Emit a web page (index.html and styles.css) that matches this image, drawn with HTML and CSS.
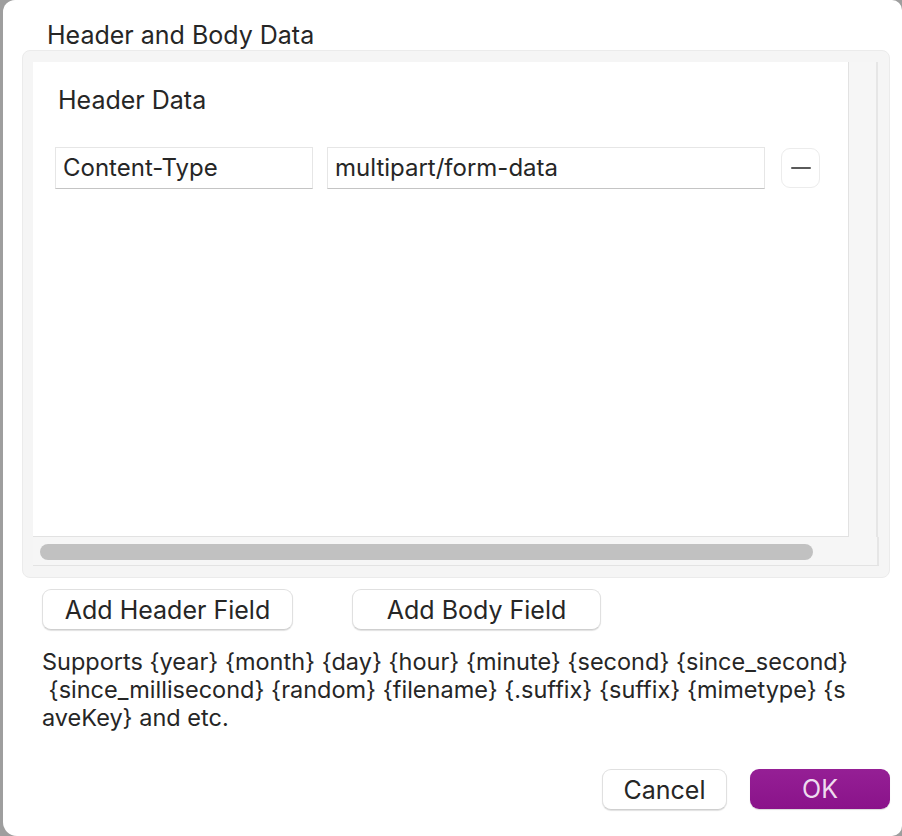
FILE: index.html
```html
<!DOCTYPE html>
<html>
<head>
<meta charset="utf-8">
<link rel="stylesheet" href="styles.css">
</head>
<body>
<div class="dialog">
  <div class="title">Header and Body Data</div>
  <div class="group">
    <div class="scroll">
      <div class="scroll-main">
        <div class="content">
          <div class="section-title">Header Data</div>
          <div class="row">
            <div class="field key">Content-Type</div>
            <div class="field value">multipart/form-data</div>
            <div class="minus"><span class="dash"></span></div>
          </div>
        </div>
        <div class="vtrack"></div>
      </div>
      <div class="htrack"><div class="thumb"></div></div>
    </div>
  </div>
  <div class="add-row">
    <button class="btn add-header">Add Header Field</button>
    <button class="btn add-body">Add Body Field</button>
  </div>
  <div class="help"><span class="line">Supports {year} {month} {day} {hour} {minute} {second} {since_second}</span><span class="line"> {since_millisecond} {random} {filename} {.suffix} {suffix} {mimetype} {s</span><span class="line">aveKey} and etc.</span></div>
  <div class="footer">
    <button class="btn cancel">Cancel</button>
    <button class="btn ok">OK</button>
  </div>
</div>
</body>
</html>
```
FILE: styles.css
```css
* { box-sizing: border-box; }
html, body { margin: 0; padding: 0; }
body {
  width: 902px;
  height: 836px;
  overflow: hidden;
  background: #9e9e9e;
  font-family: "Inter", "Noto Sans", sans-serif;
  color: #262626;
}
.dialog {
  margin-left: 3px;
  width: 899px;
  height: 836px;
  background: #ffffff;
  border-radius: 12px 10px 10px 14px;
  display: flex;
  flex-direction: column;
  padding: 0 0 0 19px;
}
.title {
  font-size: 25px;
  line-height: 28px;
  padding: 21px 0 0 25px;
  height: 50px;
}
.group {
  width: 868px;
  height: 528px;
  background: #f5f5f5;
  border: 1px solid #ebebeb;
  border-radius: 8px;
  padding: 11px 0 0 10px;
}
.scroll {
  width: 846px;
  height: 504px;
  display: flex;
  flex-direction: column;
  border-bottom: 1px solid #e3e3e3;
}
.scroll-main {
  display: flex;
  height: 475px;
}
.content {
  width: 816px;
  height: 475px;
  background: #ffffff;
  border-right: 1px solid #e2e2e2;
  border-bottom: 1px solid #e2e2e2;
  padding: 24px 0 0 22px;
}
.vtrack {
  width: 29px;
  height: 475px;
  background: #f6f6f6;
  border-right: 2px solid #e6e6e6;
}
.htrack {
  height: 28px;
  background: #f6f6f6;
  padding: 7px 0 0 7px;
  border-right: 2px solid #e6e6e6;
}
.thumb {
  width: 773px;
  height: 16px;
  border-radius: 8px;
  background: #c1c1c1;
}
.section-title {
  font-size: 25px;
  line-height: 28px;
  padding-left: 3px;
}
.row {
  display: flex;
  align-items: center;
  margin-top: 33px;
}
.field {
  height: 42px;
  background: #ffffff;
  border: 1px solid #e6e6e6;
  border-bottom: 1px solid #c4c4c4;
  font-size: 24px;
  line-height: 40px;
  padding-left: 7px;
}
.key { width: 258px; }
.value { width: 438px; margin-left: 14px; }
.minus {
  width: 39px;
  height: 40px;
  margin-left: 16px;
  border: 1px solid #ececec;
  border-radius: 9px;
  display: flex;
  align-items: center;
  justify-content: center;
}
.dash {
  width: 20px;
  height: 2px;
  background: #5a5a5a;
  border-radius: 1px;
}
.btn {
  font-family: "Inter", "Noto Sans", sans-serif;
  font-size: 25px;
  color: #262626;
  background: #ffffff;
  border: 1px solid #e0e0e0;
  border-bottom-color: #cfcfcf;
  border-radius: 9px;
  box-shadow: 0 1px 1px rgba(0,0,0,0.12);
  padding: 0;
  height: 41px;
}
.add-row {
  display: flex;
  margin-top: 11px;
  padding-left: 20px;
}
.add-header { width: 251px; }
.add-body { width: 249px; margin-left: 59px; }
.help {
  margin-top: 18px;
  padding-left: 20px;
  font-size: 23.5px;
  line-height: 28px;
  display: flex;
  flex-direction: column;
}
.help .line { white-space: pre; }
.footer {
  display: flex;
  justify-content: flex-end;
  margin-top: 37px;
  padding-right: 12px;
}
.cancel { width: 125px; height: 41px; }
.ok {
  width: 140px;
  height: 40px;
  margin-left: 23px;
  background: linear-gradient(#951f95, #8a138a);
  border: none;
  color: #eedcef;
  box-shadow: 0 1px 1px rgba(0,0,0,0.15);
}
```
